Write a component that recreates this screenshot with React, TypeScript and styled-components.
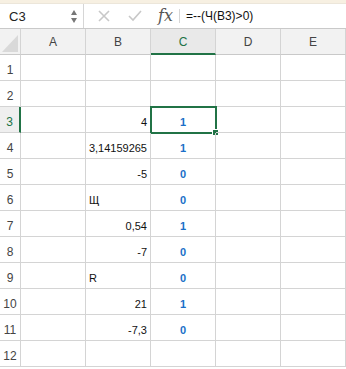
import React from 'react';
import styled, {createGlobalStyle} from "styled-components";

const GlobalStyle = createGlobalStyle`
  body {
    margin: 0;
    background: #ffffff;
    font-family: "Liberation Sans", Arial, sans-serif;
  }
`;

const Window = styled.div`
  width: 346px;
  height: 369px;
  overflow: hidden;
  background: #ffffff;
`;

const TopStrip = styled.div`
  height: 4px;
  background: #f7f0e2;
  border-bottom: 1px solid #ece6da;
  box-sizing: border-box;
`;

const FormulaBar = styled.div`
  display: flex;
  align-items: stretch;
  height: 24px;
  border-bottom: 1px solid #c9c9c9;
  background: #ffffff;
`;

const NameBox = styled.div`
  width: 84px;
  display: flex;
  align-items: center;
  justify-content: space-between;
  padding: 0 6px 0 9px;
  box-sizing: border-box;
  border-right: 1px solid #d6d6d6;
  font-size: 13px;
  color: #222;
`;

const Spinner = styled.div`
  display: flex;
  flex-direction: column;
  gap: 3px;
  padding-top: 1px;
`;

const Arrow = styled.span<{ $down?: boolean }>`
  width: 0;
  height: 0;
  border-left: 3.5px solid transparent;
  border-right: 3.5px solid transparent;
  ${p => p.$down ? "border-top: 5px solid #777;" : "border-bottom: 5px solid #777;"}
`;

const Tools = styled.div`
  display: flex;
  align-items: center;
  padding-left: 14px;
  gap: 18px;
`;

const FxLabel = styled.span`
  font-family: "DejaVu Serif", "Liberation Serif", serif;
  font-style: italic;
  font-size: 16px;
  color: #555;
  margin-left: -2px;
  padding-right: 6px;
  border-right: 1px solid #d6d6d6;
  line-height: 14px;
`;

const FormulaText = styled.div`
  display: flex;
  align-items: center;
  padding-left: 6px;
  font-size: 12px;
  color: #111;
`;

const Sheet = styled.div`
  display: grid;
  grid-template-columns: 21px repeat(5, 65px);
  grid-auto-rows: 26px;
`;

const Corner = styled.div`
  background: #f2f2f2;
  border-right: 1px solid #d4d4d4;
  border-bottom: 1px solid #c9c9c9;
  box-sizing: border-box;
  display: flex;
  align-items: flex-end;
  justify-content: flex-end;
  padding: 0 2px 2px 0;
`;

const CornerTriangle = styled.span`
  width: 0;
  height: 0;
  border-left: 16px solid transparent;
  border-bottom: 17px solid #d9d9d9;
`;

const ColHeader = styled.div<{ $active?: boolean }>`
  display: flex;
  align-items: center;
  justify-content: center;
  background: ${p => p.$active ? "#e9e9e9" : "#f2f2f2"};
  border-right: 1px solid #d4d4d4;
  border-bottom: ${p => p.$active ? "2px solid #217346" : "1px solid #c9c9c9"};
  box-sizing: border-box;
  font-size: 12px;
  color: ${p => p.$active ? "#217346" : "#444"};
  padding-top: ${p => p.$active ? "1px" : "0"};
`;

const RowHeader = styled.div<{ $active?: boolean }>`
  display: flex;
  align-items: flex-end;
  justify-content: center;
  padding-bottom: 3px;
  background: ${p => p.$active ? "#efefef" : "#ffffff"};
  border-right: ${p => p.$active ? "2px solid #217346" : "1px solid #d4d4d4"};
  border-bottom: 1px solid #d4d4d4;
  box-sizing: border-box;
  font-size: 12px;
  color: ${p => p.$active ? "#217346" : "#444"};
`;

const Cell = styled.div<{ $align?: string; $flag?: boolean }>`
  position: relative;
  display: flex;
  align-items: flex-end;
  justify-content: ${p => p.$align === "right" ? "flex-end" : p.$align === "center" ? "center" : "flex-start"};
  padding: 0 3px 3px 3px;
  border-right: 1px solid #d4d4d4;
  border-bottom: 1px solid #d4d4d4;
  box-sizing: border-box;
  font-size: 11px;
  line-height: 13px;
  color: ${p => p.$flag ? "#1b6fc8" : "#111"};
  font-weight: ${p => p.$flag ? "bold" : "normal"};
`;

const Selection = styled.div`
  position: absolute;
  left: -1px;
  top: -1px;
  right: -2px;
  bottom: -2px;
  border: 2px solid #217346;
  pointer-events: none;
`;

const FillHandle = styled.span`
  position: absolute;
  right: -4px;
  bottom: -4px;
  width: 5px;
  height: 5px;
  background: #217346;
  border: 1px solid #ffffff;
`;

const columns = ["A", "B", "C", "D", "E"];

const data: { b: string; bAlign: "left" | "right"; c: string }[] = [
    {b: "", bAlign: "right", c: ""},
    {b: "", bAlign: "right", c: ""},
    {b: "4", bAlign: "right", c: "1"},
    {b: "3,14159265", bAlign: "right", c: "1"},
    {b: "-5", bAlign: "right", c: "0"},
    {b: "Щ", bAlign: "left", c: "0"},
    {b: "0,54", bAlign: "right", c: "1"},
    {b: "-7", bAlign: "right", c: "0"},
    {b: "R", bAlign: "left", c: "0"},
    {b: "21", bAlign: "right", c: "1"},
    {b: "-7,3", bAlign: "right", c: "0"},
    {b: "", bAlign: "right", c: ""},
];

function CrossIcon() {
    return (
        <svg width="12" height="12" viewBox="0 0 12 12">
            <path d="M1 1 L11 11 M11 1 L1 11" stroke="#c8c8c8" strokeWidth="1.6" fill="none"/>
        </svg>
    );
}

function CheckIcon() {
    return (
        <svg width="14" height="12" viewBox="0 0 14 12">
            <path d="M1 6 L5 10 L13 1" stroke="#c8c8c8" strokeWidth="1.6" fill="none"/>
        </svg>
    );
}

function App() {
    return (
        <Window>
            <GlobalStyle/>
            <TopStrip/>
            <FormulaBar>
                <NameBox>
                    <span>C3</span>
                    <Spinner>
                        <Arrow/>
                        <Arrow $down/>
                    </Spinner>
                </NameBox>
                <Tools>
                    <CrossIcon/>
                    <CheckIcon/>
                    <FxLabel>fx</FxLabel>
                </Tools>
                <FormulaText>=--(Ч(B3)&gt;0)</FormulaText>
            </FormulaBar>
            <Sheet>
                <Corner><CornerTriangle/></Corner>
                {columns.map(col => (
                    <ColHeader key={col} $active={col === "C"}>{col}</ColHeader>
                ))}
                {data.map((row, i) => {
                    const rowNo = i + 1;
                    return (
                        <React.Fragment key={rowNo}>
                            <RowHeader $active={rowNo === 3}>{rowNo}</RowHeader>
                            <Cell/>
                            <Cell $align={row.bAlign}>{row.b}</Cell>
                            <Cell $align="center" $flag>
                                {row.c}
                                {rowNo === 3 && <Selection><FillHandle/></Selection>}
                            </Cell>
                            <Cell/>
                            <Cell/>
                        </React.Fragment>
                    );
                })}
            </Sheet>
        </Window>
    );
}

export default App;
